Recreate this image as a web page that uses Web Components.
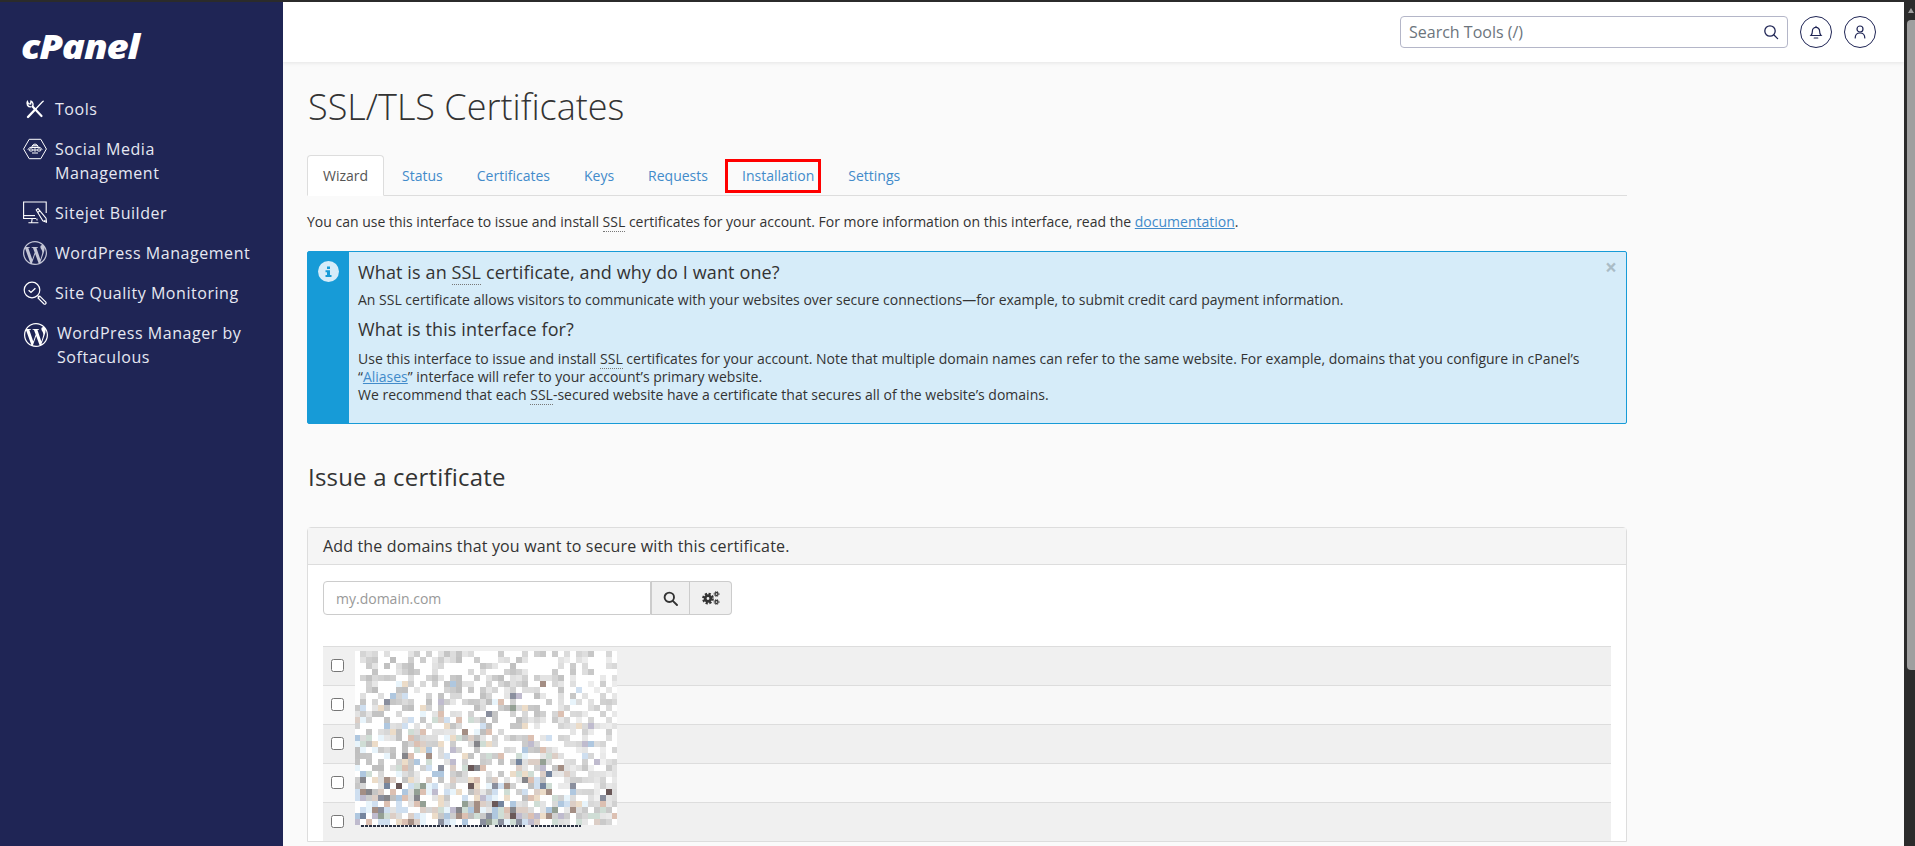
<!DOCTYPE html>
<html lang="en">
<head>
<meta charset="utf-8">
<title>SSL/TLS Certificates</title>
<style>
    html, body { margin: 0; height: 100%; overflow: hidden; background: #fafafa; }
    body { font-family: "Open Sans", "Liberation Sans", sans-serif; font-size: 14px; color: #333; }
</style>
</head>
<body>

<cp-app>
    <cp-sidebar slot="sidebar">
        <cp-nav-item icon="tools">Tools</cp-nav-item>
        <cp-nav-item icon="social">Social Media Management</cp-nav-item>
        <cp-nav-item icon="sitejet">Sitejet Builder</cp-nav-item>
        <cp-nav-item icon="wp" dim>WordPress Management</cp-nav-item>
        <cp-nav-item icon="quality">Site Quality Monitoring</cp-nav-item>
        <cp-nav-item icon="wp" nudge>WordPress Manager by Softaculous</cp-nav-item>
    </cp-sidebar>
    <cp-topbar slot="topbar"></cp-topbar>

    <cp-page-title>SSL/TLS Certificates</cp-page-title>
    <cp-tabs>
        <cp-tab active>Wizard</cp-tab>
        <cp-tab>Status</cp-tab>
        <cp-tab>Certificates</cp-tab>
        <cp-tab>Keys</cp-tab>
        <cp-tab>Requests</cp-tab>
        <cp-tab marked>Installation</cp-tab>
        <cp-tab>Settings</cp-tab>
    </cp-tabs>
    <cp-intro>You can use this interface to issue and install <cp-abbr>SSL</cp-abbr> certificates for your account. For more information on this interface, read the <cp-link>documentation</cp-link>.</cp-intro>
    <cp-alert>
        <cp-alert-heading>What is an <cp-abbr>SSL</cp-abbr> certificate, and why do I want one?</cp-alert-heading>
        <cp-alert-text>An SSL certificate allows visitors to communicate with your websites over secure connections—for example, to submit credit card payment information.</cp-alert-text>
        <cp-alert-heading>What is this interface for?</cp-alert-heading>
        <cp-alert-text>Use this interface to issue and install <cp-abbr>SSL</cp-abbr> certificates for your account. Note that multiple domain names can refer to the same website. For example, domains that you configure in cPanel’s “<cp-link>Aliases</cp-link>” interface will refer to your account’s primary website.<br>We recommend that each <cp-abbr>SSL</cp-abbr>-secured website have a certificate that secures all of the website’s domains.</cp-alert-text>
    </cp-alert>
    <cp-section-title>Issue a certificate</cp-section-title>
    <cp-card>
        <span slot="header">Add the domains that you want to secure with this certificate.</span>
        <cp-domain-search></cp-domain-search>
        <cp-domain-list>
            <cp-domain-row></cp-domain-row>
            <cp-domain-row></cp-domain-row>
            <cp-domain-row></cp-domain-row>
            <cp-domain-row></cp-domain-row>
            <cp-domain-row></cp-domain-row>
        </cp-domain-list>
    </cp-card>
</cp-app>

<script type="application/javascript">
    (function (window, document) {

        const WP_PATH = 'M21.469 6.825c.84 1.537 1.318 3.3 1.318 5.175 0 3.979-2.156 7.456-5.363 9.325l3.295-9.527c.615-1.54.82-2.771.82-3.864 0-.405-.026-.78-.07-1.11m-7.981.105c.647-.03 1.232-.105 1.232-.105.582-.075.514-.93-.067-.899 0 0-1.755.135-2.88.135-1.064 0-2.85-.15-2.85-.15-.585-.03-.661.855-.075.885 0 0 .54.061 1.125.09l1.68 4.605-2.37 7.08L5.354 6.9c.649-.03 1.234-.1 1.234-.1.585-.075.516-.93-.065-.896 0 0-1.746.138-2.874.138-.2 0-.438-.008-.69-.015C4.911 3.15 8.235 1.215 12 1.215c2.809 0 5.365 1.072 7.286 2.833-.046-.003-.091-.009-.141-.009-1.06 0-1.812.923-1.812 1.914 0 .89.513 1.643 1.06 2.531.411.72.89 1.643.89 2.977 0 .915-.354 1.994-.821 3.479l-1.075 3.585-3.9-11.61.001.014zM12 22.784c-1.059 0-2.081-.153-3.048-.437l3.237-9.406 3.315 9.087c.024.053.05.101.078.149-1.12.393-2.325.609-3.582.609M1.211 12c0-1.564.336-3.05.935-4.39L7.29 21.709C3.694 19.96 1.212 16.271 1.211 12M12 0C5.385 0 0 5.385 0 12s5.385 12 12 12 12-5.385 12-12S18.615 0 12 0';

        const ICONS = {
            tools: `<g fill="none" stroke="currentColor" stroke-linecap="round">
                <path d="M9.500 9.500l9 9.500" stroke-width="2.200"/>
                <path d="M9.600 9.200a3.600 3.600 0 0 0-1.600-5l-.4 2.700-2.300-.3-.9-2a3.600 3.600 0 0 0 3.400 5.300" stroke-width="1.400"/>
                <path d="M5 20l7.600-8" stroke-width="2.400"/>
                <path d="M13.400 11.200L19 5.200l1.200-1" stroke-width="1.300"/>
            </g>`,
            social: `<g fill="none" stroke="currentColor" stroke-width="1">
                <path d="M.6 12L6.200 2.300h11.600L23.400 12l-5.600 9.700H6.200z"/>
                <path d="M8.800 10.400c.2-2 1.500-3.300 3.200-3.300s3 1.300 3.200 3.300z"/>
                <path d="M9.400 8.700h5.200"/>
                <ellipse cx="8" cy="13" rx="2" ry="1.100"/>
                <ellipse cx="12" cy="13" rx="1.200" ry="1.100"/>
                <ellipse cx="16" cy="13" rx="2" ry="1.100"/>
                <path d="M4.800 12.800l2-2.400h10.400l2 2.400M9 16h6"/>
            </g>`,
            sitejet: `<g fill="none" stroke="currentColor" stroke-width="1.100">
                <path d="M13 17.500H.6V1h22.600v11"/>
                <path d="M.6 14.600h11.400"/>
                <path d="M9.200 17.500l-.6 4M13.800 17.500l.3 2M5.400 21.800h10"/>
                <path d="M13.200 9l1.800-1.400 8 9.600.6 4-3.800-1.400zM15 11.200l2-1.600M20.600 20.600l1.800-1.400"/>
            </g>`,
            wp: `<path fill="currentColor" d="${WP_PATH}"/>`,
            quality: `<g fill="none" stroke="currentColor">
                <circle cx="9" cy="9" r="7.800" stroke-width="1.200"/>
                <path d="M5.600 9.200l2.400 2.200 4.400-4.200" stroke-width="1.400"/>
                <path d="M14.700 14.700l1.500 1.500" stroke-width="1.200"/>
                <path d="M16.800 15.200l6 6a1.300 1.300 0 0 1-1.800 1.800l-6-6z" stroke-width="1.200"/>
            </g>`
        };

        function define(name, css, html) {
            customElements.define(name, class extends HTMLElement {
                constructor() {
                    super();
                    this.attachShadow({mode: 'open'}).innerHTML = `<style>${css}</style>${html}`;
                }
            });
        }

        define('cp-app', `
            :host { display: flex; flex-direction: column; height: 846px; border-top: 2px solid #2b2b2b; box-sizing: border-box; overflow: hidden; }
            .shell { flex: 1; min-height: 0; display: grid; grid-template-columns: 283px 1fr 11px; }
            .main { min-width: 0; display: flex; flex-direction: column; overflow: hidden; }
            .content { width: 1320px; padding: 25px 0 0 24px; }
            .scroll { background: #2b2b2b; display: flex; flex-direction: column; align-items: flex-end; }
            .arrow { width: 0; height: 0; margin: 6px 1px 0 0; border: 3.500px solid transparent; border-top: 0; border-bottom: 5px solid #9f9f9f; }
            .thumb { width: 8px; height: 650px; margin-top: 7px; background: #9f9f9f; border-radius: 4px 0 0 4px; }
        `, `
            <div class="shell">
                <slot name="sidebar"></slot>
                <div class="main">
                    <slot name="topbar"></slot>
                    <div class="content"><slot></slot></div>
                </div>
                <div class="scroll"><div class="arrow"></div><div class="thumb"></div></div>
            </div>
        `);

        define('cp-sidebar', `
            :host { display: block; background: #1f2555; color: #e6e8f2; }
            .logo { height: 95px; box-sizing: border-box; padding: 26px 0 0 21px; font: italic 800 33px/38px "Open Sans", sans-serif; color: #fff; letter-spacing: -1px; }
            .logo span { display: inline-block; transform: scaleX(1.160); transform-origin: left; }
            nav { display: flex; flex-direction: column; gap: 16px; padding-left: 23px; }
        `, `
            <div class="logo"><span>cPanel</span></div>
            <nav><slot></slot></nav>
        `);

        class NavItem extends HTMLElement {
            constructor() {
                super();
                const icon = this.getAttribute('icon');
                this.attachShadow({mode: 'open'}).innerHTML = `
                    <style>
                        :host { display: flex; gap: 8px; align-items: flex-start; font-size: 16px; line-height: 24px; letter-spacing: .55px; }
                        :host([nudge]) { padding-left: 2px; }
                        span { max-width: 200px; }
                        svg { flex: none; width: 24px; height: 24px; color: #fff; }
                        :host([dim]) svg { color: #c4c6d6; }
                        :host([nudge]) svg { margin-top: 2px; margin-left: -1px; margin-right: 1px; }
                    </style>
                    <svg viewBox="0 0 24 24" aria-hidden="true">${ICONS[icon]}</svg>
                    <span><slot></slot></span>`;
            }
        }
        customElements.define('cp-nav-item', NavItem);

        define('cp-topbar', `
            :host { display: flex; align-items: center; justify-content: flex-end; gap: 12px; flex: none; height: 60px; padding-right: 28px; background: #fff; box-shadow: 0 1px 4px rgba(0,0,0,.09); position: relative; }
            .search { width: 388px; height: 32px; box-sizing: border-box; border: 1px solid #b4b6c8; border-radius: 4px; display: flex; align-items: center; justify-content: space-between; padding: 0 8px; font-size: 16px; color: #6c757d; }
            .search svg { width: 16px; height: 16px; color: #1f2555; }
            .round { width: 32px; height: 32px; box-sizing: border-box; border: 1px solid #1f2555; border-radius: 50%; display: flex; align-items: center; justify-content: center; color: #1f2555; }
            .round svg { width: 16px; height: 16px; }
        `, `
            <div class="search"><span>Search Tools (/)</span>
                <svg viewBox="0 0 16 16" fill="none" stroke="currentColor" stroke-width="1.300"><circle cx="7" cy="7" r="5.200"/><path d="M11 11l3.600 3.600" stroke-linecap="round"/></svg>
            </div>
            <div class="round"><svg viewBox="0 0 16 16" fill="none" stroke="currentColor" stroke-width="1.200"><path d="M3 11.500h10c-1-1-1.400-2-1.400-4.500a3.600 3.600 0 0 0-7.200 0c0 2.500-.4 3.500-1.400 4.500zM8 3.400V2.400M6.200 14h3.600" stroke-linecap="round"/></svg></div>
            <div class="round"><svg viewBox="0 0 16 16" fill="none" stroke="currentColor" stroke-width="1.200"><circle cx="8" cy="5" r="3"/><path d="M3.200 14c0-3 1.800-5 4.800-5s4.800 2 4.800 5" stroke-linecap="round"/></svg></div>
        `);

        define('cp-page-title', `
            :host { display: block; font-size: 36px; font-weight: 300; line-height: 40px; color: #333; margin-bottom: 28px; padding-left: 1px; }
        `, `<slot></slot>`);

        define('cp-tabs', `
            :host { display: flex; gap: 2px; border-bottom: 1px solid #ddd; height: 41px; box-sizing: border-box; }
        `, `<slot></slot>`);

        define('cp-tab', `
            :host { display: block; position: relative; height: 41px; box-sizing: border-box; padding: 10px 15px; line-height: 20px; border: 1px solid transparent; color: #428bca; border-radius: 4px 4px 0 0; }
            :host([active]) { color: #555; background: #fff; border-color: #ddd #ddd #fff; }
            :host([marked])::after { content: ""; position: absolute; left: -2px; right: 8px; top: 3px; bottom: 2px; border: 3px solid #f00; box-sizing: border-box; }
        `, `<slot></slot>`);

        define('cp-intro', `
            :host { display: block; line-height: 20px; margin-top: 16px; }
        `, `<slot></slot>`);

        define('cp-abbr', `
            :host { display: inline; border-bottom: 1px dotted #777; }
        `, `<slot></slot>`);

        define('cp-link', `
            :host { display: inline; color: #428bca; text-decoration: underline; }
        `, `<slot></slot>`);

        define('cp-alert', `
            :host { display: flex; margin-top: 19px; height: 173px; box-sizing: border-box; border: 1px solid #179bd7; border-radius: 2px; background: #d6ecf9; position: relative; }
            .side { flex: none; width: 41px; background: #179bd7; display: flex; justify-content: center; padding-top: 9px; box-sizing: border-box; }
            .side svg { width: 21px; height: 21px; }
            .body { flex: 1; padding: 6px 9px 0; }
            .close { position: absolute; right: 9px; top: 3px; font-size: 21px; font-weight: 700; line-height: 24px; color: #000; opacity: .2; }
        `, `
            <div class="side"><svg viewBox="0 0 21 21"><circle cx="10.500" cy="10.500" r="10.500" fill="#d6ecf9"/><path fill="#179bd7" d="M9 5.500h3v2.400H9zM7.500 9.200h4.500v4.700h1.500v2H7.500v-2H9v-2.700H7.500z"/></svg></div>
            <div class="body"><slot></slot></div>
            <div class="close">×</div>
        `);

        define('cp-alert-heading', `
            :host { display: block; font-size: 18px; line-height: 28px; color: #333; letter-spacing: .12px; }
        `, `<slot></slot>`);

        define('cp-alert-text', `
            :host { display: block; line-height: 18px; color: #333; margin: 5px 0 6px; letter-spacing: 0; }
            :host(:last-child) { margin-top: 7px; }
        `, `<slot></slot>`);

        define('cp-section-title', `
            :host { display: block; font-size: 24px; line-height: 26px; margin-top: 40px; padding-left: 1px; color: #333; letter-spacing: .19px; }
        `, `<slot></slot>`);

        define('cp-card', `
            :host { display: block; margin-top: 37px; border: 1px solid #ddd; border-radius: 4px 4px 0 0; background: #fff; }
            header { height: 37px; box-sizing: border-box; padding: 0 15px; display: flex; align-items: center; font-size: 16px; letter-spacing: .16px; background: #f5f5f5; border-bottom: 1px solid #ddd; color: #333; }
            .body { padding: 16px 15px 0; }
        `, `
            <header><slot name="header"></slot></header>
            <div class="body"><slot></slot></div>
        `);

        define('cp-domain-search', `
            :host { display: flex; height: 34px; width: 409px; }
            .field { flex: 1; box-sizing: border-box; border: 1px solid #ccc; border-radius: 4px 0 0 4px; background: #fff; display: flex; align-items: center; padding: 0 12px; color: #999; }
            .btn { flex: none; box-sizing: border-box; border: 1px solid #ccc; border-left: 0; background: #f0f0f0; display: flex; align-items: center; justify-content: center; color: #333; }
            .btn.find { width: 39px; border-left: 1px solid #ccc; }
            .btn.opts { width: 42px; border-radius: 0 4px 4px 0; }
        `, `
            <div class="field">my.domain.com</div>
            <div class="btn find"><svg width="15" height="15" viewBox="0 0 15 15" fill="none" stroke="currentColor" stroke-width="1.900"><circle cx="6.300" cy="6.300" r="4.700"/><path d="M9.800 9.800l4.200 4.200" stroke-linecap="round"/></svg></div>
            <div class="btn opts"><svg width="18" height="14" viewBox="0 0 18 14" fill="none" stroke="currentColor">
                <circle cx="6" cy="7.500" r="2.800" stroke-width="2.800"/><circle cx="6" cy="7.500" r="4.800" stroke-width="2.200" stroke-dasharray="2.200 1.570"/>
                <circle cx="14.500" cy="3" r="1.500" stroke-width="1.300"/><circle cx="14.500" cy="3" r="2.600" stroke-width=".8" stroke-dasharray="1 1.100"/>
                <circle cx="14.500" cy="11" r="1.500" stroke-width="1.300"/><circle cx="14.500" cy="11" r="2.600" stroke-width=".8" stroke-dasharray="1 1.100"/>
            </svg></div>
        `);

        class DomainList extends HTMLElement {
            constructor() {
                super();
                const root = this.attachShadow({mode: 'open'});
                root.innerHTML = `
                    <style>
                        :host { display: block; position: relative; margin-top: 31px; }
                        svg { position: absolute; left: 32px; top: 5px; }
                    </style>
                    <slot></slot>
                    <svg width="262" height="177" viewBox="0 0 262 177" shape-rendering="crispEdges">${this.mosaic()}</svg>`;
            }

            // the blurred out domain names, darker and more coloured towards the bottom
            mosaic() {
                let seed = 20240611;
                const rand = () => {
                    seed = (seed + 0x6D2B79F5) | 0;
                    let t = Math.imul(seed ^ (seed >>> 15), 1 | seed);
                    t = (t + Math.imul(t ^ (t >>> 7), 61 | t)) ^ t;
                    return ((t ^ (t >>> 14)) >>> 0) / 4294967296;
                };
                const tints = ['#cfdff0', '#ecdcc8', '#afc7df', '#dccec6', '#cfddd5', '#bfbbce', '#dcc0b2', '#e8f4fb'];
                const darks = ['#85858a', '#8a8f9e', '#6a5858', '#94a094', '#75859e', '#a48e84'];
                let out = '<rect width="262" height="174" fill="#fff"/>';
                for (let row = 0; row < 29; row++) {
                    const depth = row / 28;
                    for (let col = 0; col < 44; col++) {
                        const fade = col > 31 ? Math.max(.2, 1 - (col - 31) / 12) : 1;
                        const ink = .4 + .4 * depth;
                        if (rand() > ink) continue;
                        let fill;
                        const pick = rand();
                        if (pick < depth * depth * .24 * fade) {
                            fill = darks[Math.floor(rand() * darks.length)];
                        } else if (pick < (depth - .12) * .95 * fade) {
                            fill = tints[Math.floor(rand() * tints.length)];
                        } else {
                            const light = rand();
                            const v = Math.floor(190 + light * 42 + (1 - fade) * 14);
                            fill = `rgb(${v},${v},${v})`;
                        }
                        out += `<rect x="${col * 6 - 1}" y="${row * 6}" width="6" height="6" fill="${fill}"/>`;
                    }
                }
                // bottom of the name that shows under the blur
                out += '<path d="M6 175h90M100 175h34M140 175h30M176 175h50" stroke="#2d3344" stroke-width="1.500" stroke-dasharray="3 1"/>';
                return out;
            }
        }
        customElements.define('cp-domain-list', DomainList);

        define('cp-domain-row', `
            :host { display: flex; align-items: center; height: 39px; box-sizing: border-box; border-top: 1px solid #ddd; padding: 0 0 1px 8px; background: #f8f8f8; }
            :host(:nth-child(odd)) { background: #f0f0f0; }
            input { margin: 0; width: 13px; height: 13px; }
        `, `<input type="checkbox">`);

    })(window, document);
</script>
</body>
</html>
